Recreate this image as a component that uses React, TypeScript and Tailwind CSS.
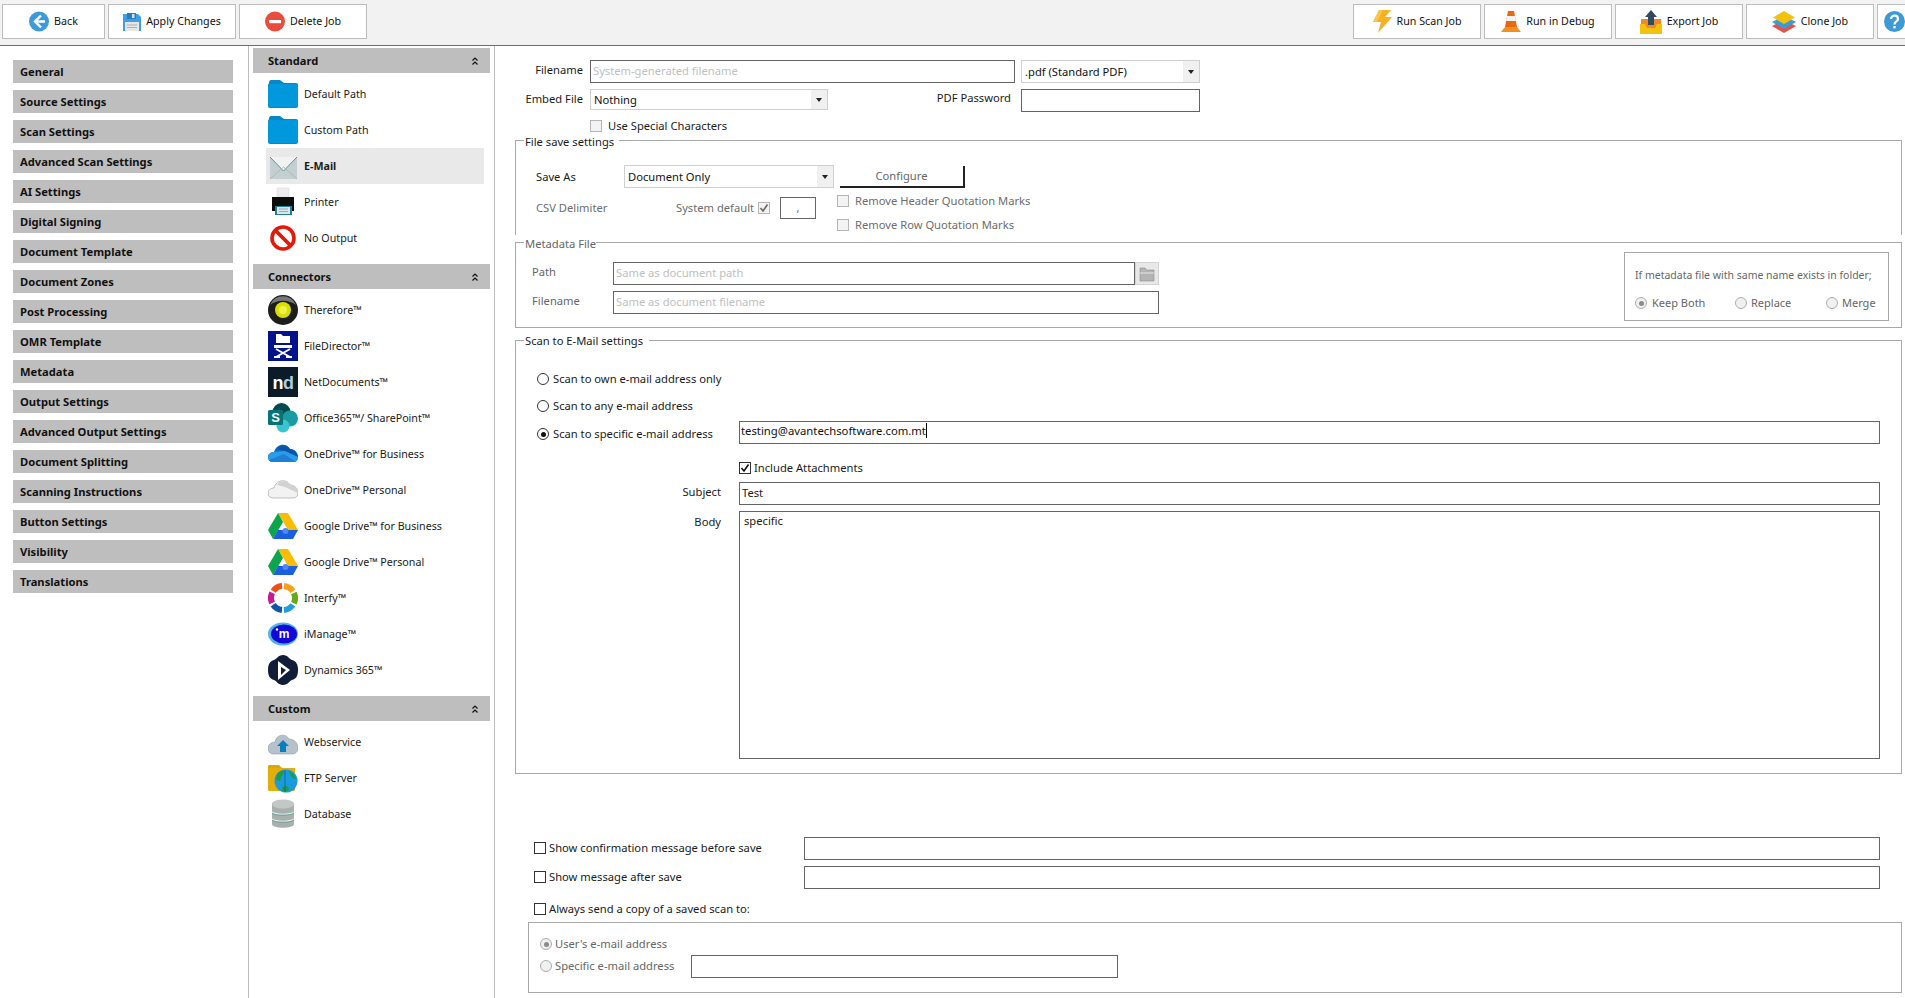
import type { ReactNode } from "react";

const Svg = ({ w, h, children }: { w: number; h: number; children: ReactNode }) => (
  <svg width={w} height={h} viewBox={`0 0 ${w} ${h}`} className="shrink-0 block">
    {children}
  </svg>
);

/* toolbar icons */
const BackIcon = () => (
  <Svg w={20} h={21}>
    <circle cx="10" cy="10.5" r="10" fill="#3d9ad9" />
    <path d="M12 4.5 L6 10.5 L12 16.5 M6.5 10.5 H16" fill="none" stroke="#fff" strokeWidth="2.4" />
  </Svg>
);
const SaveIcon = () => (
  <Svg w={18} h={18}>
    <path d="M0 1 H15 L18 4 V18 H0 Z" fill="#3f9ee6" />
    <rect x="4" y="0" width="9" height="6" fill="#2a7cc0" />
    <rect x="9" y="1" width="2.5" height="4" fill="#cfe4f5" />
    <rect x="2" y="9" width="14" height="9" fill="#e6e6e6" />
    <path d="M4 12 H14 M4 14.5 H14" stroke="#b0b0b0" />
  </Svg>
);
const DeleteIcon = () => (
  <Svg w={20} h={21}>
    <circle cx="10" cy="10.5" r="10" fill="#e84c3d" />
    <rect x="4" y="9" width="12" height="3.2" fill="#fff" />
  </Svg>
);
const BoltIcon = () => (
  <Svg w={19} h={23}>
    <path d="M6 0 H18 L12 7 H19 L5 23 L8 12 H0 Z" fill="#f5b120" />
    <path d="M6 0 H10 L4 12 H0 Z" fill="#f8c64a" />
  </Svg>
);
const ConeIcon = () => (
  <Svg w={20} h={21}>
    <path d="M7 0 H13 L16 16 H4 Z" fill="#e8670f" />
    <path d="M6 5 H14 L15 10 H5 Z" fill="#f3f3f3" />
    <path d="M0 21 L4 16 H16 L20 21 Z" fill="#f09020" />
  </Svg>
);
const ExportIcon = () => (
  <Svg w={22} h={24}>
    <rect x="1" y="9" width="20" height="9" fill="#ee8a2a" />
    <path d="M0 14 H5 L7 18 H15 L17 14 H22 V24 H0 Z" fill="#f4c20d" />
    <path d="M11 0 L17 7 H14 V15 H8 V7 H5 Z" fill="#2f4a63" />
  </Svg>
);
const CloneIcon = () => (
  <Svg w={24} h={22}>
    <path d="M12 9 L24 15 L12 22 L0 15 Z" fill="#e8503f" />
    <path d="M12 5 L24 11 L12 18 L0 11 Z" fill="#3d9ad9" />
    <path d="M12 0 L23 6.5 L12 13 L1 6.5 Z" fill="#f4c20d" />
  </Svg>
);
const HelpIcon = () => (
  <Svg w={21} h={21}>
    <circle cx="10.5" cy="10.5" r="10.5" fill="#3d9ad9" />
    <path d="M7 8 C7 3.5 14 3.5 14 8 C14 10.5 10.5 10.5 10.5 13.5" fill="none" stroke="#fff" strokeWidth="2.2" />
    <rect x="9.3" y="15" width="2.4" height="2.4" fill="#fff" />
  </Svg>
);

/* list icons, all in a 30x30 box */
const Box = ({ children }: { children: ReactNode }) => <Svg w={30} h={30}>{children}</Svg>;
const FolderIcon = () => (
  <Box>
    <path d="M1 4 Q1 1 3 1 H12 L16 4 H28 Q30 4 30 6 V27 Q30 29 28 29 H2 Q0 29 0 27 V6 Z" fill="#0a86c4" />
    <path d="M0 7 Q0 5 2 5 H28 Q30 5 30 7 V26 Q30 28 28 28 H2 Q0 28 0 26 Z" fill="#0098dc" />
  </Box>
);
const MailIcon = () => (
  <Box>
    <rect x="2" y="6" width="27" height="22" rx="1" fill="#c4cfd2" />
    <path d="M2 6 H29 L15.5 20 Z" fill="#f1f3f3" />
    <path d="M2 6 L15.5 20 L29 6" fill="none" stroke="#4f9c98" strokeWidth="1" />
    <path d="M2 28 L15.5 16 L29 28" fill="none" stroke="#aeb9bc" strokeWidth="1" />
  </Box>
);
const PrinterIcon = () => (
  <Box>
    <rect x="9" y="1" width="12" height="9" fill="#ececec" stroke="#d8d8d8" strokeWidth="0.5" />
    <path d="M4 10 H26 V24 H4 Z" fill="#0c0c0c" />
    <rect x="7" y="19" width="17" height="9" fill="#1b8098" />
    <rect x="9" y="20" width="13" height="7" fill="#d9e6ea" />
    <path d="M11 22 H20 M11 24.5 H20" stroke="#9aa9ae" />
  </Box>
);
const NoIcon = () => (
  <Box>
    <circle cx="15" cy="15" r="11" fill="#fff" stroke="#e3170a" strokeWidth="3.6" />
    <path d="M7.5 7.5 L22.5 22.5" stroke="#e3170a" strokeWidth="3.8" />
  </Box>
);
const ThereforeIcon = () => (
  <Box>
    <circle cx="15" cy="15" r="15" fill="#1d1d1d" />
    <path d="M2 10 A14 14 0 0 1 28 10 A16 10 0 0 0 2 10" fill="#777" />
    <circle cx="15" cy="15" r="8" fill="#d9e000" />
    <circle cx="15" cy="15" r="4" fill="#eef24a" />
  </Box>
);
const FileDirectorIcon = () => (
  <Box>
    <rect width="30" height="30" fill="#00128c" />
    <path d="M8 3 H13 L15 5 H22 V12 H8 Z" fill="#fff" />
    <rect x="6" y="14" width="18" height="3" fill="#fff" />
    <path d="M8 26 L22 18 M22 26 L8 18 M6 26 H12 M18 26 H24" stroke="#fff" strokeWidth="1.8" />
  </Box>
);
const NetDocsIcon = () => (
  <div className="w-[30px] h-[30px] shrink-0 bg-[#0b1b28] flex items-center justify-center font-['Liberation_Sans',sans-serif] text-[18px] font-bold leading-none tracking-[-0.5px] pt-[2px]">
    <span className="text-white">n</span>
    <span className="text-[#a9cde3]">d</span>
  </div>
);
const SharePointIcon = () => (
  <Box>
    <circle cx="13.5" cy="9" r="9" fill="#03494d" />
    <circle cx="22" cy="15.5" r="8" fill="#1a9ba1" />
    <circle cx="15" cy="23" r="6.5" fill="#37c6d0" />
    <rect x="0" y="7" width="15" height="15" rx="1.5" fill="#05747a" />
    <text x="7.5" y="19" textAnchor="middle" fontSize="13" fontWeight="700" fontFamily="'Liberation Sans',sans-serif" fill="#fff">S</text>
  </Box>
);
const OneDriveIcon = () => (
  <Box>
    <path d="M6 13 C8 5 18 3 22 10 C27 10 30 14 30 18 C30 21 28 23 25 23 H5 C2 23 0 21 0 18 C0 15 3 13 6 13 Z" fill="#0f6cc4" />
    <path d="M9 10 C12 5 19 5 22 10 C26 10 29 13 30 18 L17 12 Z" fill="#0a55a8" />
    <path d="M0 18 C0 15 3 13 6 13 L17 12 L30 18 C30 21 28 23 25 23 H5 C2 23 0 21 0 18 Z" fill="#2a9ce8" />
    <path d="M1 21 L16 15 L28 23 H5 C3 23 2 22 1 21 Z" fill="#1e7fd6" />
  </Box>
);
const OneDriveGreyIcon = () => (
  <Box>
    <path d="M6 13 C8 5 18 3 22 10 C27 10 30 14 30 18 C30 21 28 23 25 23 H5 C2 23 0 21 0 18 C0 15 3 13 6 13 Z" fill="#f2f2f2" stroke="#bdbdbd" />
    <path d="M9 10 C12 5 19 5 22 10 C26 10 29 13 30 18 L17 12 Z" fill="#d2d2d2" />
  </Box>
);
const DriveIcon = () => (
  <Box>
    <path d="M10 2 H20 L30 19 H20 Z" fill="#fbbc05" />
    <path d="M10 2 L15 11 L5 28 L0 19 Z" fill="#0da54b" />
    <path d="M10 19 H30 L25 28 H5 Z" fill="#1b5fe0" />
    <circle cx="17.5" cy="20" r="3" fill="#4a8af0" />
  </Box>
);
const interfySegments = [
  { angle: -30, color: "#f04e12" },
  { angle: 30, color: "#f7a11a" },
  { angle: 90, color: "#6aa816" },
  { angle: 150, color: "#1f9ed9" },
  { angle: 210, color: "#0f56a8" },
  { angle: 270, color: "#c9189a" },
];
const InterfyIcon = () => (
  <Box>
    {interfySegments.map((s) => (
      <circle
        key={s.angle}
        cx="15"
        cy="15"
        r="12"
        fill="none"
        stroke={s.color}
        strokeWidth="6"
        strokeDasharray="10.5 64.9"
        transform={`rotate(${s.angle - 25 - 90} 15 15)`}
      />
    ))}
  </Box>
);
const IManageIcon = () => (
  <Box>
    <ellipse cx="15" cy="15" rx="15" ry="11.5" fill="#4fb4e8" />
    <ellipse cx="16" cy="15" rx="13" ry="9.5" fill="#1408d8" />
    <text x="16" y="19" textAnchor="middle" fontSize="12" fontWeight="700" fontFamily="'Liberation Sans',sans-serif" fill="#fff">m</text>
    <circle cx="9" cy="10.5" r="1.2" fill="#fff" />
  </Box>
);
const DynamicsIcon = () => (
  <Box>
    <path d="M15 0 C20 0 21 4 24 5 C28 6 30 9 30 15 C30 21 28 24 24 25 C21 26 20 30 15 30 C10 30 9 26 6 25 C2 24 0 21 0 15 C0 9 2 6 6 5 C9 4 10 0 15 0 Z" fill="#101c38" />
    <path d="M10 6 L22 15 L10 25 Z" fill="#fff" />
    <path d="M13 12 L18 15 L13 20 Z" fill="#101c38" />
  </Box>
);
const WebserviceIcon = () => (
  <Box>
    <g transform="translate(0 3)">
      <path d="M7 12 C8 4 18 3 21 9 C26 9 30 13 30 18 C30 22 27 24 24 24 H5 C2 24 0 21 0 18 C0 15 3 12 7 12 Z" fill="#b6c2c9" stroke="#8f9ca3" strokeWidth="0.6" />
      <path d="M15 10 L21 16 H18 V22 H12 V16 H9 Z" fill="#0a7fc0" />
    </g>
  </Box>
);
const FtpIcon = () => (
  <Box>
    <path d="M1 2 H11 L14 5 H27 V27 H0 V3 Z" fill="#d9a70a" />
    <rect x="0" y="5" width="27" height="23" rx="1.5" fill="#e3ae0c" />
    <circle cx="18" cy="18" r="11.5" fill="#1a9be0" />
    <path d="M9 11 C12 7 16 7 16 9 C16 12 13 12 13 16 C13 19 9 18 8 16 Z" fill="#1d9c4c" />
    <path d="M14 24 C17 22 21 23 21 26 C21 29 15 29 14 27 Z M21 8 C24 9 28 13 28 16 C25 16 22 13 21 8 Z" fill="#1d9c4c" />
    <path d="M17 7 V29" stroke="#0e5c96" strokeWidth="0.8" />
  </Box>
);
const DatabaseIcon = () => (
  <Box>
    <path d="M4 5 C4 0 26 0 26 5 V25 C26 30 4 30 4 25 Z" fill="#a8b0ad" />
    <ellipse cx="15" cy="5" rx="11" ry="4.5" fill="#c2c8c6" />
    <path d="M4 13 C7 16 23 16 26 13 M4 20 C7 23 23 23 26 20" fill="none" stroke="#e9eeee" strokeWidth="1.2" />
    <path d="M4 14 C7 17 23 17 26 14 M4 21 C7 24 23 24 26 21" fill="none" stroke="#5b9a95" strokeWidth="0.8" />
  </Box>
);

/* small form controls */
const Check = ({ on, grey }: { on?: boolean; grey?: boolean }) => (
  <span className={`w-[12px] h-[12px] shrink-0 border flex items-center justify-center ${grey ? "border-[#b5b5b5] bg-[#f3f3f3]" : "border-[#333333] bg-white"}`}>
    {on && (
      <svg width="10" height="10" viewBox="0 0 10 10">
        <path d="M1.5 5 L4 8 L8.5 1.5" fill="none" stroke={grey ? "#666666" : "#111111"} strokeWidth="1.6" />
      </svg>
    )}
  </span>
);
const Radio = ({ on, grey }: { on?: boolean; grey?: boolean }) => (
  <span className={`w-[12px] h-[12px] shrink-0 rounded-full border flex items-center justify-center ${grey ? "border-[#adadad] bg-[#f0f0f0]" : "border-[#333333] bg-white"}`}>
    {on && <span className={`w-[5px] h-[5px] rounded-full ${grey ? "bg-[#8a8a8a]" : "bg-[#111111]"}`} />}
  </span>
);
const Field = ({ className, placeholder, value }: { className: string; placeholder?: string; value?: string }) => (
  <input
    readOnly
    placeholder={placeholder}
    defaultValue={value}
    className={`h-[23px] shrink-0 border border-[#646464] bg-white px-[2px] pb-[2px] outline-none text-[#1a1a1a] placeholder:text-[#c0c0c0] ${className}`}
  />
);
const Select = ({ className, label }: { className: string; label: string }) => (
  <div className={`flex shrink-0 items-center border border-[#cfcfcf] bg-white text-[#111111] ${className}`}>
    <span className="flex-1 pl-[3px] pt-[1px]">{label}</span>
    <span className="w-[16px] self-stretch bg-[#f0f0f0] flex items-center justify-center">
      <svg width="6" height="4" viewBox="0 0 6 4"><path d="M0 0 H6 L3 4 Z" fill="#222222" /></svg>
    </span>
  </div>
);

const navItems = ["General", "Source Settings", "Scan Settings", "Advanced Scan Settings", "AI Settings", "Digital Signing", "Document Template", "Document Zones", "Post Processing", "OMR Template", "Metadata", "Output Settings", "Advanced Output Settings", "Document Splitting", "Scanning Instructions", "Button Settings", "Visibility", "Translations"];

const sections: { title: string; items: { label: string; icon: ReactNode; active?: boolean }[] }[] = [
  {
    title: "Standard",
    items: [
      { label: "Default Path", icon: <FolderIcon /> },
      { label: "Custom Path", icon: <FolderIcon /> },
      { label: "E-Mail", icon: <MailIcon />, active: true },
      { label: "Printer", icon: <PrinterIcon /> },
      { label: "No Output", icon: <NoIcon /> },
    ],
  },
  {
    title: "Connectors",
    items: [
      { label: "Therefore™", icon: <ThereforeIcon /> },
      { label: "FileDirector™", icon: <FileDirectorIcon /> },
      { label: "NetDocuments™", icon: <NetDocsIcon /> },
      { label: "Office365™/ SharePoint™", icon: <SharePointIcon /> },
      { label: "OneDrive™ for Business", icon: <OneDriveIcon /> },
      { label: "OneDrive™ Personal", icon: <OneDriveGreyIcon /> },
      { label: "Google Drive™ for Business", icon: <DriveIcon /> },
      { label: "Google Drive™ Personal", icon: <DriveIcon /> },
      { label: "Interfy™", icon: <InterfyIcon /> },
      { label: "iManage™", icon: <IManageIcon /> },
      { label: "Dynamics 365™", icon: <DynamicsIcon /> },
    ],
  },
  {
    title: "Custom",
    items: [
      { label: "Webservice", icon: <WebserviceIcon /> },
      { label: "FTP Server", icon: <FtpIcon /> },
      { label: "Database", icon: <DatabaseIcon /> },
    ],
  },
];

const ToolButton = ({ icon, label, w }: { icon: ReactNode; label: string; w: string }) => (
  <button className={`h-[35px] shrink-0 border border-[#bdbdbd] bg-white flex items-center justify-center gap-[5px] text-[#111111] ${w}`}>
    {icon}
    <span className="pb-[1px]">{label}</span>
  </button>
);

export default function App() {
  return (
    <div className="h-screen w-full overflow-hidden bg-white flex flex-col font-['Noto_Sans',sans-serif] text-[11.2px] text-[#1a1a1a]">
      <div className="h-[46px] shrink-0 border-b border-[#6e6e6e] bg-[#f2f2f2] pt-[4px] pl-[2px] flex gap-[3px] overflow-hidden text-[10.7px]">
        <ToolButton w="w-[103px]" icon={<BackIcon />} label="Back" />
        <ToolButton w="w-[128px]" icon={<SaveIcon />} label="Apply Changes" />
        <ToolButton w="w-[128px]" icon={<DeleteIcon />} label="Delete Job" />
        <div className="w-[980px] shrink-0" />
        <ToolButton w="w-[128px]" icon={<BoltIcon />} label="Run Scan Job" />
        <ToolButton w="w-[128px]" icon={<ConeIcon />} label="Run in Debug" />
        <ToolButton w="w-[128px]" icon={<ExportIcon />} label="Export Job" />
        <ToolButton w="w-[128px]" icon={<CloneIcon />} label="Clone Job" />
        <button className="h-[35px] w-[40px] shrink-0 border border-[#bdbdbd] bg-white pl-[6px]">
          <HelpIcon />
        </button>
      </div>

      <div className="flex-1 flex min-h-0">
        <div className="w-[249px] shrink-0 border-r border-[#bdbdbd] pt-[14px] pl-[13px] flex flex-col gap-[7px] text-[11.2px]">
          {navItems.map((item) => (
            <div key={item} className="w-[220px] h-[23px] bg-[#bebebe] pl-[7px] pt-[1px] flex items-center font-bold text-[#111111]">
              {item}
            </div>
          ))}
        </div>

        <div className="w-[246px] shrink-0 border-r border-[#bdbdbd] pt-[2px] pl-[4px] text-[10.7px]">
          {sections.map((section) => (
            <div key={section.title} className="mb-[8px]">
              <div className="w-[237px] h-[25px] bg-[#bebebe] pl-[15px] pr-[12px] flex items-center justify-between font-bold text-[11.1px] text-[#111111]">
                <span className="pt-[1px]">{section.title}</span>
                <svg width="6" height="8" viewBox="0 0 6 8">
                  <path d="M0.5 3.5 L3 1 L5.5 3.5 M0.5 7.5 L3 5 L5.5 7.5" fill="none" stroke="#111111" strokeWidth="1.2" />
                </svg>
              </div>
              <div className="mt-[3px]">
                {section.items.map((item) => (
                  <div key={item.label} className={`ml-[13px] w-[218px] h-[36px] pl-[2px] flex items-center gap-[6px] ${item.active ? "bg-[#e9e9e9] font-bold" : ""}`}>
                    {item.icon}
                    <span>{item.label}</span>
                  </div>
                ))}
              </div>
            </div>
          ))}
        </div>

        <div className="flex-1 min-w-0 pt-[14px]">
          <div className="flex items-center h-[23px]">
            <span className="w-[88px] text-right pb-[2px]">Filename</span>
            <Field className="ml-[7px] w-[425px]" placeholder="System-generated filename" />
            <Select className="ml-[6px] w-[179px] h-[23px]" label=".pdf (Standard PDF)" />
          </div>
          <div className="mt-[6px] flex h-[23px] items-start">
            <span className="w-[88px] text-right leading-[19px]">Embed File</span>
            <Select className="ml-[7px] w-[238px] h-[21px]" label="Nothing" />
            <span className="w-[183px] text-right leading-[17px]">PDF Password</span>
            <Field className="ml-[10px] w-[179px]" />
          </div>
          <div className="mt-[8px] ml-[95px] h-[11px] flex items-center gap-[6px]">
            <Check grey />
            <span className="pt-[1px]">Use Special Characters</span>
          </div>

          <fieldset className="ml-[20px] mr-[3px] h-[104px] border border-b-0 border-[#a8a8a8] pl-[20px]">
            <legend className="ml-[-12px] pl-[1px] pr-[5px] h-[18px] leading-[22px]">File save settings</legend>
            <div className="mt-[16px] flex items-center h-[23px]">
              <span className="w-[88px] pt-[2px]">Save As</span>
              <Select className="w-[210px] h-[23px]" label="Document Only" />
              <button className="ml-[6px] w-[125px] h-[22px] pt-[1px] border-r-2 border-b-2 border-[#222222] text-[#666666]">Configure</button>
            </div>
            <div className="mt-[6px] flex items-start text-[#6d6d6d]">
              <div className="flex items-center mt-[3px] h-[22px]">
                <span className="w-[140px]">CSV Delimiter</span>
                <span className="w-[82px]">System default</span>
                <Check on grey />
                <span className="ml-[10px] w-[36px] h-[22px] border border-[#646464] flex items-center justify-center">,</span>
              </div>
              <div className="ml-[21px] mt-[1px] flex flex-col gap-[12px]">
                <div className="h-[12px] flex items-center gap-[6px]"><Check grey /><span>Remove Header Quotation Marks</span></div>
                <div className="h-[12px] flex items-center gap-[6px]"><Check grey /><span>Remove Row Quotation Marks</span></div>
              </div>
            </div>
          </fieldset>

          <fieldset className="ml-[20px] mr-[3px] h-[93px] border border-[#a8a8a8] text-[#666666]">
            <legend className="ml-[8px] pl-[1px] h-[14px] leading-[17px]">Metadata File</legend>
            <div className="flex">
              <div className="pl-[16px] pt-[13px]">
                <div className="flex items-center">
                  <span className="w-[81px] pb-[2px]">Path</span>
                  <Field className="w-[522px]" placeholder="Same as document path" />
                  <span className="w-[24px] h-[23px] bg-[#e8e8e8] border border-[#d4d4d4] flex items-center justify-center">
                    <svg width="16" height="16" viewBox="0 0 16 16">
                      <path d="M1 2 H6 L8 4 H15 V15 H1 Z" fill="#b4b4b4" stroke="#8f8f8f" strokeWidth="0.6" />
                      <path d="M1 7 H15" stroke="#e6e6e6" />
                    </svg>
                  </span>
                </div>
                <div className="mt-[6px] flex items-center">
                  <span className="w-[81px] pb-[2px]">Filename</span>
                  <Field className="w-[546px]" placeholder="Same as document filename" />
                </div>
              </div>
              <div className="ml-auto mr-[12px] mt-[3px] w-[265px] h-[69px] border border-[#a8a8a8] pl-[10px] pt-[13px] text-[10.5px]">
                <div className="leading-[18px]">If metadata file with same name exists in folder;</div>
                <div className="mt-[10px] flex items-center h-[18px] text-[11px]">
                  <span className="w-[100px] flex items-center gap-[5px]"><Radio on grey />Keep Both</span>
                  <span className="w-[91px] flex items-center gap-[4px]"><Radio grey />Replace</span>
                  <span className="flex items-center gap-[4px]"><Radio grey />Merge</span>
                </div>
              </div>
            </div>
          </fieldset>

          <fieldset className="mt-[3px] ml-[20px] mr-[3px] h-[443px] border border-[#a8a8a8] pl-[21px]">
            <legend className="ml-[-13px] pl-[1px] pr-[6px] h-[18px] leading-[20px]">Scan to E-Mail settings</legend>
            <div className="mt-[21px] h-[18px] flex items-center gap-[4px]"><Radio />Scan to own e-mail address only</div>
            <div className="mt-[9px] h-[18px] flex items-center gap-[4px]"><Radio />Scan to any e-mail address</div>
            <div className="mt-[6px] flex items-start">
              <div className="w-[202px] mt-[4px] h-[18px] flex items-center gap-[4px]"><Radio on />Scan to specific e-mail address</div>
              <div className="w-[1141px] h-[23px] border border-[#646464] pl-[1px] leading-[17px] text-[#111111] text-[11.3px]">
                <span className="border-r border-black pr-[0.5px]">testing@avantechsoftware.com.mt</span>
              </div>
            </div>
            <div className="mt-[15px] ml-[202px] h-[18px] flex items-center gap-[3px]"><Check on />Include Attachments</div>
            <div className="mt-[5px] flex items-center">
              <span className="w-[184px] text-right mr-[18px] pb-[2px]">Subject</span>
              <Field className="w-[1141px]" value="Test" />
            </div>
            <div className="mt-[6px] flex items-start">
              <span className="w-[184px] text-right mr-[18px] leading-[22px]">Body</span>
              <div className="w-[1141px] h-[248px] border border-[#646464] px-[4px] leading-[18px]">specific</div>
            </div>
          </fieldset>

          <div className="mt-[63px] ml-[39px] flex items-center">
            <div className="w-[270px] flex items-center gap-[3px]"><Check />Show confirmation message before save</div>
            <Field className="w-[1076px]" />
          </div>
          <div className="mt-[6px] ml-[39px] flex items-center">
            <div className="w-[270px] flex items-center gap-[3px]"><Check />Show message after save</div>
            <Field className="w-[1076px]" />
          </div>
          <div className="mt-[11px] ml-[39px] h-[18px] flex items-center gap-[3px]"><Check />Always send a copy of a saved scan to:</div>
          <div className="mt-[4px] ml-[33px] w-[1374px] h-[71px] border border-[#a8a8a8] pl-[11px] pt-[12px] text-[#666666]">
            <div className="h-[18px] flex items-center gap-[3px]"><Radio on grey />User's e-mail address</div>
            <div className="mt-[2px] flex items-center">
              <div className="w-[151px] flex items-center gap-[3px]"><Radio grey />Specific e-mail address</div>
              <Field className="w-[427px]" />
            </div>
          </div>
        </div>
      </div>
    </div>
  );
}
